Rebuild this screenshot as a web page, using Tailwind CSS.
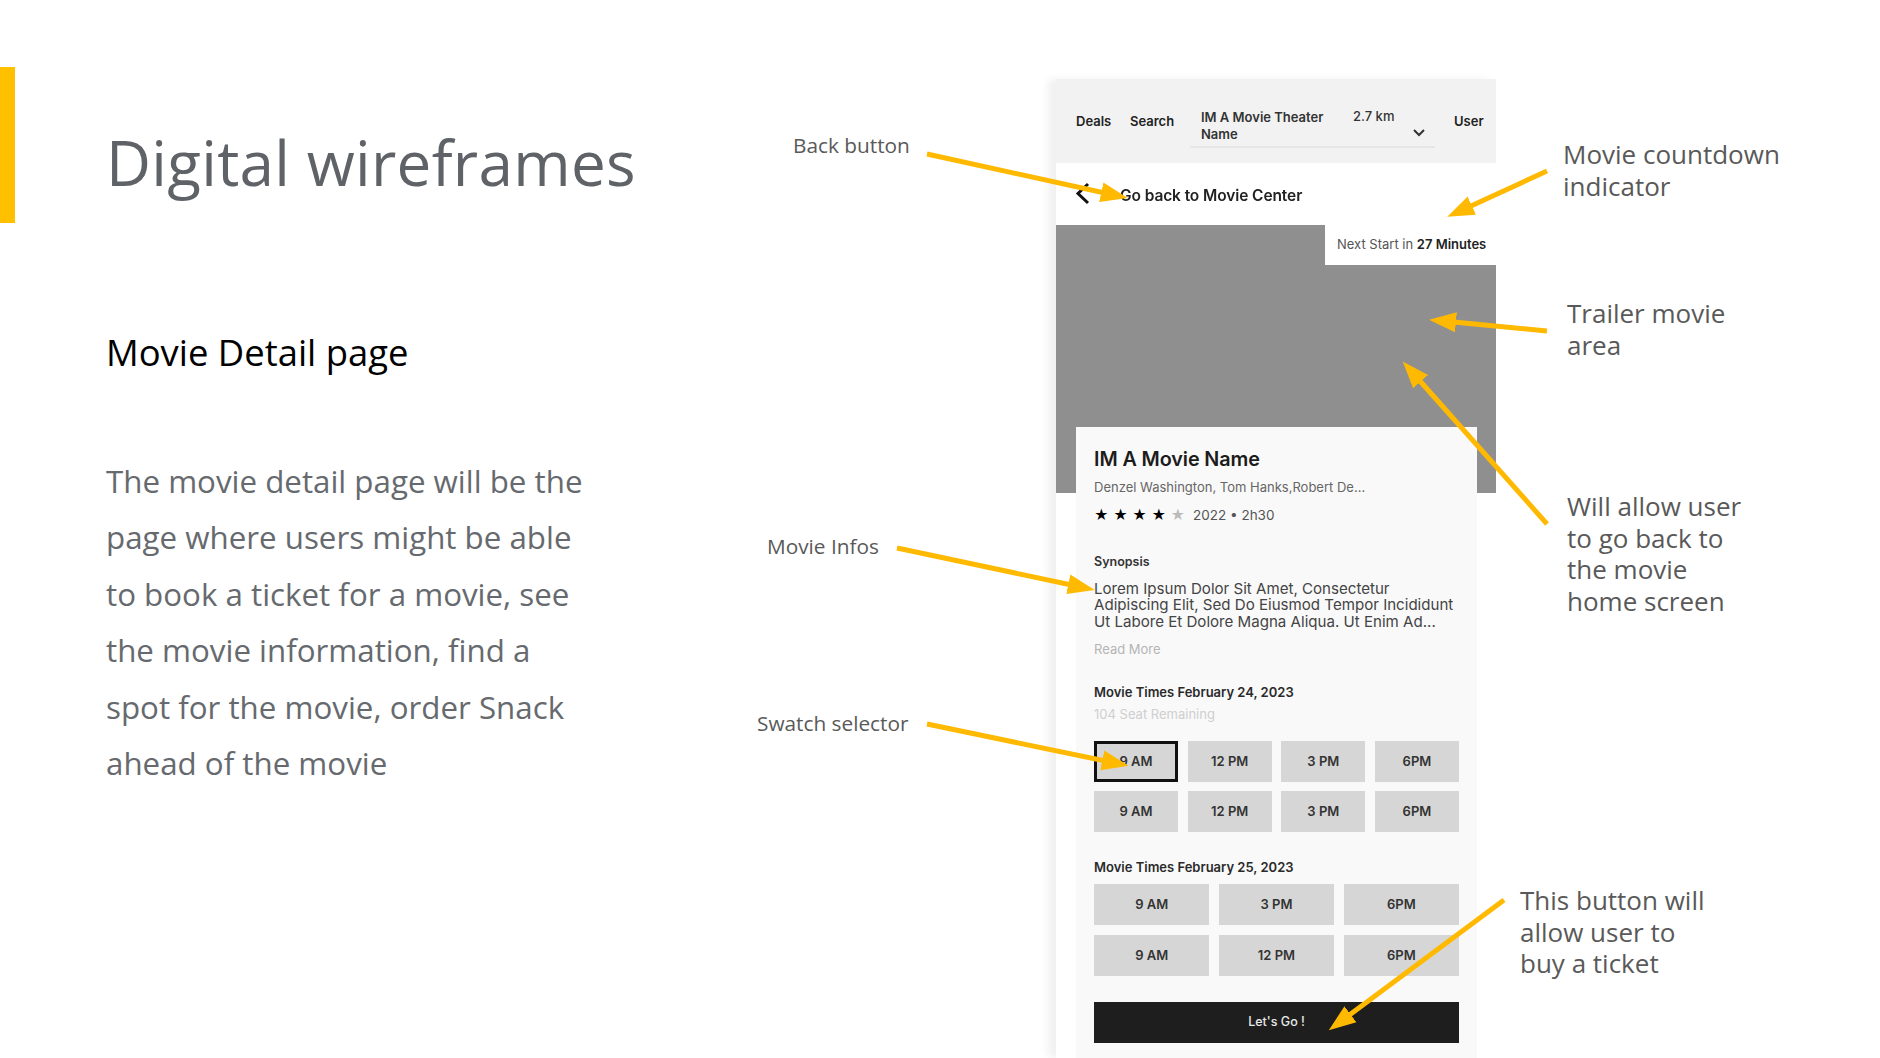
<!DOCTYPE html>
<html lang="en">
<head>
    <meta charset="UTF-8" />
    <title>Digital wireframes</title>
    <script src="https://cdn.jsdelivr.net/npm/@tailwindcss/browser@4"></script>
</head>
<body class="bg-white">
    <div class="relative w-[1880px] h-[1058px] overflow-hidden bg-white font-['Open_Sans',sans-serif]">
        <!-- yellow side bar -->
        <div class="absolute left-0 top-[67px] w-[15px] h-[156px] bg-[#ffc000]"></div>

        <!-- left column -->
        <div class="absolute left-[106px] top-[119px] w-[560px]">
            <h1 class="text-[62px] leading-[86px] font-normal tracking-[0.3px] text-[#5f6368] whitespace-nowrap">Digital wireframes</h1>
            <h2 class="mt-[122px] text-[36.4px] leading-[50px] font-normal text-black whitespace-nowrap">Movie Detail page</h2>
            <p class="mt-[76px] text-[31.3px] leading-[56.4px] font-normal text-[#666a6e] whitespace-nowrap">The movie detail page will be the<br />page where users might be able<br />to book a ticket for a movie, see<br />the movie information, find a<br />spot for the movie, order Snack<br />ahead of the movie</p>
        </div>

        <!-- phone wireframe -->
        <div class="absolute left-[1056px] top-[79px] w-[440px] h-[979px] bg-white shadow-[-8px_0_8px_rgba(0,0,0,0.06)] font-['Inter',sans-serif] blur-[0.6px]">
            <!-- top nav -->
            <div class="h-[84px] bg-[#f2f2f2] flex items-center pl-[20px] text-[13px] font-semibold text-[#222]">
                <span class="w-[54px] mt-[2px]">Deals</span>
                <span class="w-[60px] mt-[2px]">Search</span>
                <div class="relative w-[245px] h-[62px] mb-[8px] border-b-2 border-[#e6e6e6] pl-[11px] pt-[23px] leading-[17px] text-[#333]">
                    <div class="w-[140px]">IM A Movie Theater Name</div>
                    <span class="absolute left-[163px] top-[22px] font-medium">2.7 km</span>
                    <svg class="absolute left-[222px] top-[42px]" width="14" height="10" viewBox="0 0 14 10" fill="none" stroke="#333" stroke-width="2"><path d="M2 2l5 5 5-5" /></svg>
                </div>
                <span class="ml-[19px] mt-[2px]">User</span>
            </div>
            <!-- back row -->
            <div class="h-[62px] flex items-center pl-[19px] pt-[3px]">
                <svg class="-mt-[5px]" width="16" height="24" viewBox="0 0 16 24" fill="none" stroke="#111" stroke-width="3"><path d="M13 3L3 12.5L13 22" /></svg>
                <span class="ml-[29px] text-[15.5px] font-semibold text-[#222] tracking-[-0.1px]">Go back to Movie Center</span>
            </div>
            <!-- trailer -->
            <div class="relative h-[268px] bg-[#8f8f8f]">
                <div class="absolute right-0 top-0 w-[171px] h-[40px] bg-white flex items-center pl-[12px] text-[13px] text-[#555] whitespace-nowrap">Next Start in&nbsp;<b class="font-semibold text-[#222]">27 Minutes</b></div>
            </div>
            <!-- info card -->
            <div class="absolute left-[20px] top-[348px] w-[401px] h-[631px] bg-[#f9f9f9] px-[18px]">
                <div class="mt-[19px] text-[19.8px] leading-[26px] font-semibold text-[#1c1c1c] tracking-[-0.1px]">IM A Movie Name</div>
                <div class="mt-[6px] text-[13px] leading-[18px] text-[#666]">Denzel Washington, Tom Hanks,Robert De...</div>
                <div class="mt-[9px] flex items-center h-[20px]">
                    <span class="flex gap-[4.5px] text-[14px] leading-[20px] w-[99px] text-black"><span>★</span><span>★</span><span>★</span><span>★</span><span class="text-[#bbb]">★</span></span>
                    <span class="text-[13.5px] text-[#555]">2022 • 2h30</span>
                </div>
                <div class="mt-[28px] text-[12.5px] leading-[18px] font-semibold text-[#333]">Synopsis</div>
                <p class="mt-[10px] text-[15.1px] leading-[16.4px] text-[#444] whitespace-nowrap">Lorem Ipsum Dolor Sit Amet, Consectetur<br />Adipiscing Elit, Sed Do Eiusmod Tempor Incididunt<br />Ut Labore Et Dolore Magna Aliqua. Ut Enim Ad...</p>
                <div class="mt-[10px] text-[13px] leading-[18px] text-[#b5b5b5]">Read More</div>
                <div class="mt-[25px] text-[13px] leading-[18px] font-semibold text-[#2a2a2a]">Movie Times February 24, 2023</div>
                <div class="mt-[4px] text-[13px] leading-[18px] text-[#cfcfcf]">104 Seat Remaining</div>
                <div class="mt-[18px] grid grid-cols-4 gap-x-[9.5px] gap-y-[9px] text-[13px] font-semibold text-[#333]">
                    <div class="h-[41px] bg-[#d6d6d6] flex items-center justify-center border-[3px] border-[#111]">9 AM</div>
                    <div class="h-[41px] bg-[#d6d6d6] flex items-center justify-center">12 PM</div>
                    <div class="h-[41px] bg-[#d6d6d6] flex items-center justify-center">3 PM</div>
                    <div class="h-[41px] bg-[#d6d6d6] flex items-center justify-center">6PM</div>
                    <div class="h-[41px] bg-[#d6d6d6] flex items-center justify-center">9 AM</div>
                    <div class="h-[41px] bg-[#d6d6d6] flex items-center justify-center">12 PM</div>
                    <div class="h-[41px] bg-[#d6d6d6] flex items-center justify-center">3 PM</div>
                    <div class="h-[41px] bg-[#d6d6d6] flex items-center justify-center">6PM</div>
                </div>
                <div class="mt-[26px] text-[13px] leading-[18px] font-semibold text-[#2a2a2a]">Movie Times February 25, 2023</div>
                <div class="mt-[8px] grid grid-cols-3 gap-x-[9.5px] gap-y-[10px] text-[13px] font-semibold text-[#333]">
                    <div class="h-[41px] bg-[#d6d6d6] flex items-center justify-center">9 AM</div>
                    <div class="h-[41px] bg-[#d6d6d6] flex items-center justify-center">3 PM</div>
                    <div class="h-[41px] bg-[#d6d6d6] flex items-center justify-center">6PM</div>
                    <div class="h-[41px] bg-[#d6d6d6] flex items-center justify-center">9 AM</div>
                    <div class="h-[41px] bg-[#d6d6d6] flex items-center justify-center">12 PM</div>
                    <div class="h-[41px] bg-[#d6d6d6] flex items-center justify-center">6PM</div>
                </div>
                <div class="mt-[26px] h-[41px] bg-[#1e1e1e] flex items-center justify-center text-[12.5px] font-medium text-[#e8e8e8]">Let's Go !</div>
            </div>
        </div>

        <!-- annotation labels -->
        <div class="absolute left-[793px] top-[131px] text-[20.8px] leading-[28px] text-[#595959] whitespace-nowrap">Back button</div>
        <div class="absolute left-[767px] top-[532px] text-[20.8px] leading-[28px] text-[#595959] whitespace-nowrap">Movie Infos</div>
        <div class="absolute left-[757px] top-[709px] text-[20.8px] leading-[28px] text-[#595959] whitespace-nowrap">Swatch selector</div>
        <div class="absolute left-[1563px] top-[139px] text-[26px] leading-[31.7px] text-[#595959] whitespace-nowrap">Movie countdown<br />indicator</div>
        <div class="absolute left-[1567px] top-[298px] text-[26px] leading-[31.7px] text-[#595959] whitespace-nowrap">Trailer movie<br />area</div>
        <div class="absolute left-[1567px] top-[491px] text-[26px] leading-[31.7px] text-[#595959] whitespace-nowrap">Will allow user<br />to go back to<br />the movie<br />home screen</div>
        <div class="absolute left-[1520px] top-[885px] text-[26px] leading-[31.7px] text-[#595959] whitespace-nowrap">This button will<br />allow user to<br />buy a ticket</div>

        <!-- arrows -->
        <svg class="absolute inset-0" width="1880" height="1058" viewBox="0 0 1880 1058" fill="none" stroke="#ffb900" stroke-width="5">
            <defs>
                <marker id="head" markerUnits="userSpaceOnUse" markerWidth="28" markerHeight="22" refX="13" refY="11" orient="auto">
                    <path d="M0 1L27 11L0 21Z" fill="#ffb900" stroke="none" />
                </marker>
            </defs>
            <path d="M927 154L1114 195" marker-end="url(#head)" />
            <path d="M1547 171L1460 211" marker-end="url(#head)" />
            <path d="M1547 331L1443 321" marker-end="url(#head)" />
            <path d="M1547 524L1412 372" marker-end="url(#head)" />
            <path d="M897 548L1081 587" marker-end="url(#head)" />
            <path d="M927 724L1115 763" marker-end="url(#head)" />
            <path d="M1504 900L1340 1022" marker-end="url(#head)" />
        </svg>
    </div>
</body>
</html>
